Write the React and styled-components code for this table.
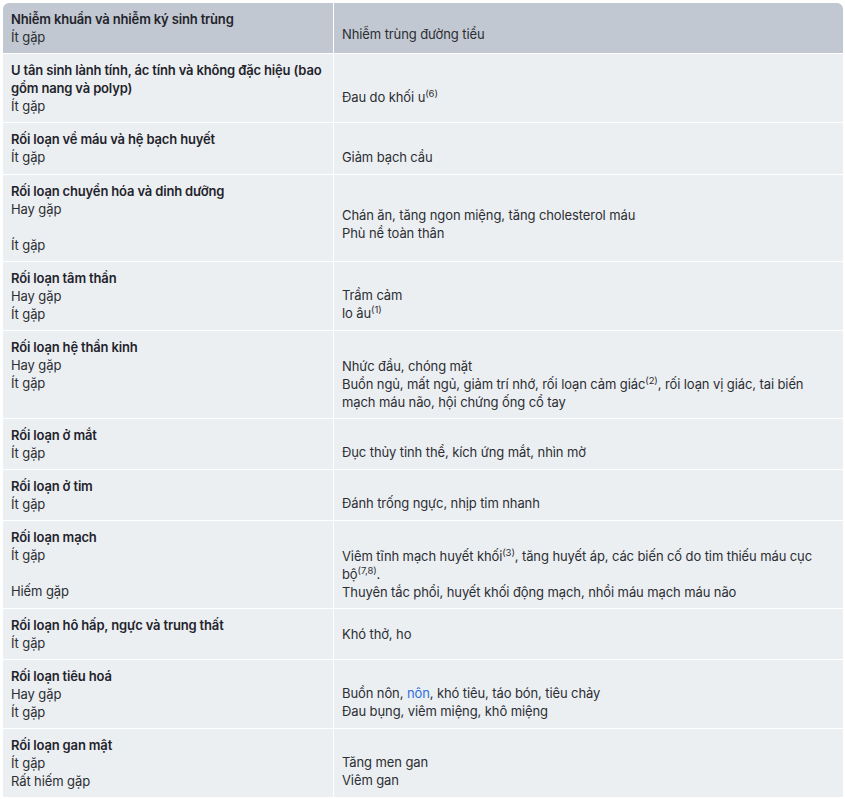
import React from 'react'
import styled, { createGlobalStyle } from 'styled-components'

const GlobalStyle = createGlobalStyle`
  body {
    margin: 0;
    background: #ffffff;
    font-family: Inter, "Noto Sans", "Liberation Sans", sans-serif;
  }
`

const Wrap = styled.div`
  padding: 3px 2px 0 3px;
`

const Table = styled.table`
  width: 840px;
  table-layout: fixed;
  border-collapse: separate;
  border-spacing: 0;
  font-size: 13px;
  line-height: 18px;
  letter-spacing: -0.1px;
  color: #2b2e33;
`

const Cell = styled.td`
  padding: ${({ side }) => (side === 'left' ? '7px 5px 7px 8px' : '7px 24px 7px 8px')};
  background: ${({ head }) => (head ? '#c2c8d1' : '#eceff2')};
  border-bottom: 1px solid #ffffff;
  vertical-align: ${({ side }) => (side === 'left' ? 'top' : 'middle')};
  border-right: ${({ side }) => (side === 'left' ? '1px solid #ffffff' : 'none')};
  &:first-child {
    border-top-left-radius: ${({ head }) => (head ? '6px' : '0')};
  }
  &:last-child {
    border-top-right-radius: ${({ head }) => (head ? '6px' : '0')};
  }
`

const Group = styled.div`
  font-weight: 600;
  letter-spacing: -0.16px;
  color: #1f242c;
`

const Line = styled.div`
  min-height: ${({ tall }) => (tall ? '19px' : '18px')};
  line-height: ${({ tall }) => (tall ? '19px' : '18px')};
`

const Lead = styled.div`
  height: ${({ h }) => h}px;
`

const Sup = styled.sup`
  font-size: 9.5px;
  line-height: 0;
`

const Link = styled.span`
  color: #2f6fde;
`

const rows = [
  {
    head: true,
    group: 'Nhiễm khuẩn và nhiễm ký sinh trùng',
    freq: ['Ít gặp'],
    lead: 12,
    effects: [['Nhiễm trùng đường tiểu']],
  },
  {
    group: 'U tân sinh lành tính, ác tính và không đặc hiệu (bao gồm nang và polyp)',
    freq: ['Ít gặp'],
    lead: 18,
    effects: [[<>Đau do khối u<Sup>(6)</Sup></>, true]],
  },
  {
    group: 'Rối loạn về máu và hệ bạch huyết',
    freq: ['Ít gặp'],
    lead: 18,
    effects: [['Giảm bạch cầu', true]],
  },
  {
    group: 'Rối loạn chuyển hóa và dinh dưỡng',
    freq: ['Hay gặp', '', 'Ít gặp'],
    lead: 11,
    effects: [['Chán ăn, tăng ngon miệng, tăng cholesterol máu'], ['Phù nề toàn thân']],
  },
  {
    group: 'Rối loạn tâm thần',
    freq: ['Hay gặp', 'Ít gặp'],
    effects: [['Trầm cảm'], [<>lo âu<Sup>(1)</Sup></>]],
  },
  {
    group: 'Rối loạn hệ thần kinh',
    freq: ['Hay gặp', 'Ít gặp'],
    lead: 19,
    effects: [
      ['Nhức đầu, chóng mặt'],
      [<>Buồn ngủ, mất ngủ, giảm trí nhớ, rối loạn cảm giác<Sup>(2)</Sup>, rối loạn vị giác, tai biến mạch máu não, hội chứng ống cổ tay</>],
    ],
  },
  {
    group: 'Rối loạn ở mắt',
    freq: ['Ít gặp'],
    effects: [['Đục thủy tinh thể, kích ứng mắt, nhìn mờ']],
  },
  {
    group: 'Rối loạn ở tim',
    freq: ['Ít gặp'],
    effects: [['Đánh trống ngực, nhịp tim nhanh']],
  },
  {
    group: 'Rối loạn mạch',
    freq: ['Ít gặp', '', 'Hiếm gặp'],
    lead: 19,
    effects: [
      [<>Viêm tĩnh mạch huyết khối<Sup>(3)</Sup>, tăng huyết áp, các biến cố do tim thiếu máu cục bộ<Sup>(7,8)</Sup>.</>],
      ['Thuyên tắc phổi, huyết khối động mạch, nhồi máu mạch máu não'],
    ],
  },
  {
    group: 'Rối loạn hô hấp, ngực và trung thất',
    freq: ['Ít gặp'],
    lead: 0,
    effects: [['Khó thở, ho']],
  },
  {
    group: 'Rối loạn tiêu hoá',
    freq: ['Hay gặp', 'Ít gặp'],
    effects: [
      [<>Buồn nôn, <Link>nôn</Link>, khó tiêu, táo bón, tiêu chảy</>],
      ['Đau bụng, viêm miệng, khô miệng'],
    ],
  },
  {
    group: 'Rối loạn gan mật',
    freq: ['Ít gặp', 'Rất hiếm gặp'],
    effects: [['Tăng men gan'], ['Viêm gan']],
  },
]

export default function App() {
  return (
    <>
      <GlobalStyle />
      <Wrap>
        <Table>
          <colgroup>
            <col style={{ width: 331 }} />
            <col />
          </colgroup>
          <tbody>
            {rows.map((row, index) => (
              <tr key={index}>
                <Cell side="left" head={row.head}>
                  <Group>{row.group}</Group>
                  {row.freq.map((f, i) => (
                    <Line key={i}>{f}</Line>
                  ))}
                </Cell>
                <Cell side="right" head={row.head}>
                  <Lead h={row.lead !== undefined ? row.lead : 16} />
                  {row.effects.map(([e, tall], i) => (
                    <Line key={i} tall={tall}>{e}</Line>
                  ))}
                </Cell>
              </tr>
            ))}
          </tbody>
        </Table>
      </Wrap>
    </>
  )
}
